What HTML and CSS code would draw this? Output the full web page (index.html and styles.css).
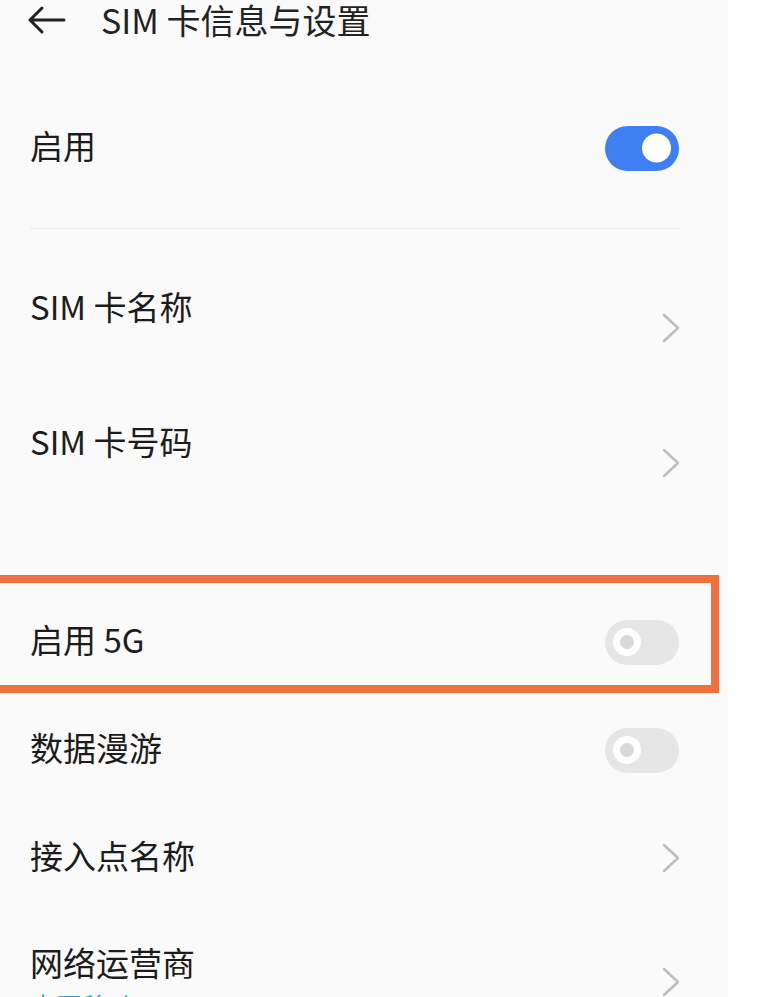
FILE: index.html
```html
<!DOCTYPE html>
<html lang="zh-CN">
<head>
  <meta charset="UTF-8">
  <meta name="viewport" content="width=device-width, initial-scale=1.0">
  <title>SIM 卡信息与设置</title>
  <link rel="stylesheet" href="styles.css">
</head>
<body>
<div class="screen">
  <header class="topbar">
    <svg class="back" width="40" height="30" viewBox="0 0 40 30">
      <path d="M37 15H3M15 3L3 15l12 12" fill="none" stroke="#222" stroke-width="3" stroke-linecap="round" stroke-linejoin="round"/>
    </svg>
    <h1>SIM 卡信息与设置</h1>
  </header>

  <div class="row row-enable">
    <span class="label">启用</span>
    <span class="switch on"><span class="knob"></span></span>
  </div>

  <div class="divider"><hr></div>

  <div class="row row-tall">
    <span class="label label-up">SIM 卡名称</span>
    <svg class="chevron" width="18" height="30" viewBox="0 0 18 30"><path d="M2 2l14 13L2 28" fill="none" stroke="#bdbdbd" stroke-width="2.5" stroke-linecap="round" stroke-linejoin="round"/></svg>
  </div>

  <div class="row row-tall">
    <span class="label label-up">SIM 卡号码</span>
    <svg class="chevron" width="18" height="30" viewBox="0 0 18 30"><path d="M2 2l14 13L2 28" fill="none" stroke="#bdbdbd" stroke-width="2.5" stroke-linecap="round" stroke-linejoin="round"/></svg>
  </div>

  <div class="spacer"></div>

  <div class="row highlighted">
    <span class="label">启用 5G</span>
    <span class="switch off"><span class="knob"></span></span>
  </div>

  <div class="row">
    <span class="label">数据漫游</span>
    <span class="switch off"><span class="knob"></span></span>
  </div>

  <div class="row">
    <span class="label">接入点名称</span>
    <svg class="chevron" width="18" height="30" viewBox="0 0 18 30"><path d="M2 2l14 13L2 28" fill="none" stroke="#bdbdbd" stroke-width="2.5" stroke-linecap="round" stroke-linejoin="round"/></svg>
  </div>

  <div class="row row-last">
    <div class="text">
      <span class="label">网络运营商</span>
      <span class="sub">中国移动</span>
    </div>
    <svg class="chevron" width="18" height="30" viewBox="0 0 18 30"><path d="M2 2l14 13L2 28" fill="none" stroke="#bdbdbd" stroke-width="2.5" stroke-linecap="round" stroke-linejoin="round"/></svg>
  </div>
</div>
</body>
</html>
```

FILE: styles.css
```css
html, body {
  margin: 0;
  padding: 0;
  background: #fff;
  font-family: "Noto Sans CJK SC", "Noto Sans", sans-serif;
  color: #1c1c1c;
  overflow: hidden;
}
.screen {
  width: 728px;
  height: 997px;
  background: #fafafa;
  overflow: hidden;
}
.topbar {
  height: 40px;
  display: flex;
  align-items: center;
  padding-left: 27px;
}
.back {
  display: block;
  margin-right: 34px;
}
.topbar h1 {
  margin: 0;
  font-size: 34px;
  font-weight: 400;
  line-height: 40px;
  color: #222;
}
.row {
  position: relative;
  height: 108px;
  display: flex;
  align-items: center;
  justify-content: space-between;
  padding: 0 48px 0 30px;
}
.row-enable {
  margin-top: 64px;
  height: 88px;
}
.divider {
  height: 68px;
  padding: 36px 48px 0 30px;
  box-sizing: border-box;
}
.divider hr {
  margin: 0;
  border: none;
  height: 1px;
  background: #ebebeb;
}
.row-tall {
  height: 135px;
}
.label {
  font-size: 33px;
  line-height: 40px;
  font-weight: 400;
  margin-bottom: 6px;
}
.label-up {
  margin-bottom: 44px;
}
.spacer {
  height: 58px;
}
.chevron {
  display: block;
}
.switch {
  position: relative;
  width: 74px;
  height: 45px;
  border-radius: 23px;
  background: #e6e6e6;
  margin-right: 1px;
}
.switch .knob {
  position: absolute;
  top: 50%;
  transform: translateY(-50%);
  border-radius: 50%;
  box-sizing: border-box;
}
.switch.on {
  background: #3f7ff4;
}
.switch.on .knob {
  right: 8px;
  width: 29px;
  height: 29px;
  background: #fff;
}
.switch.off .knob {
  left: 8px;
  width: 28px;
  height: 28px;
  border: 7px solid #fff;
  background: #d9d9d9;
}
.highlighted::after {
  content: "";
  position: absolute;
  top: -13px;
  bottom: 3px;
  left: -12px;
  right: 9px;
  border: 8px solid #f0703e;
}
.row-last {
  height: auto;
  align-items: center;
  padding-top: 30px;
}
.row-last .label {
  margin-bottom: 0;
}
.text {
  display: flex;
  flex-direction: column;
}
.sub {
  margin-top: 8px;
  font-size: 26px;
  line-height: 32px;
  color: #3a9bd5;
}
```
